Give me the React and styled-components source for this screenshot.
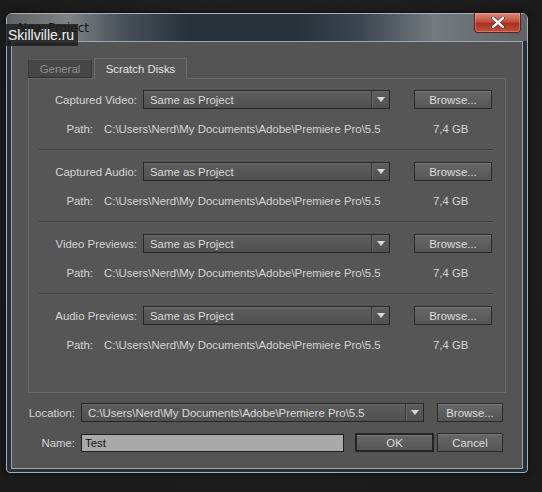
import React from "react"
import styled, { createGlobalStyle } from "styled-components"

const GlobalStyle = createGlobalStyle`
  html, body {
    margin: 0;
    padding: 0;
    background: #1d1d1d;
  }
  body {
    font-family: "Liberation Sans", Arial, sans-serif;
    font-size: 11.4px;
  }
`

const Page = styled.div`
  position: relative;
  width: 542px;
  height: 492px;
  padding: 13px 0 0 6px;
  box-sizing: border-box;
  background: radial-gradient(ellipse at 50% 40%, #262626 0%, #1b1b1b 80%);
`

const Watermark = styled.div`
  position: absolute;
  left: 0;
  top: 24px;
  width: 78px;
  height: 22px;
  background: rgba(28, 28, 28, 0.82);
  color: #f2f2f2;
  font-size: 14px;
  line-height: 22px;
  padding-left: 8px;
  box-sizing: border-box;
`

const Window = styled.div`
  width: 522px;
  height: 460px;
  box-sizing: border-box;
  border: 1px solid #a7b0b6;
  border-radius: 6px 6px 4px 4px;
  background: #25303a;
  padding: 0 4px 3px 4px;
  display: flex;
  flex-direction: column;
  box-shadow: 0 0 6px rgba(0, 0, 0, 0.6);
`

const TitleBar = styled.div`
  position: relative;
  height: 27px;
  margin: 0 -4px;
  padding: 0 0 0 11px;
  border-radius: 5px 5px 0 0;
  background: linear-gradient(
    90deg,
    #5e6367 0%,
    #7d8286 12%,
    #49525a 22%,
    #28323b 35%,
    #27313a 55%,
    #3c4650 68%,
    #737a80 82%,
    #5d6369 100%
  );
  display: flex;
  align-items: center;
`

const Title = styled.span`
  color: #161616;
  font-family: "DejaVu Sans", sans-serif;
  font-size: 12px;
  margin-top: 1px;
`

const CloseButton = styled.div`
  position: absolute;
  right: 6px;
  top: -1px;
  width: 45px;
  height: 19px;
  border: 1px solid #5a2420;
  border-top: none;
  border-radius: 0 0 4px 4px;
  background: linear-gradient(180deg, #d88a7c 0%, #c45040 45%, #a8301f 55%, #c2503c 100%);
  box-shadow: inset 0 0 0 1px rgba(255, 200, 190, 0.35);
  display: flex;
  align-items: center;
  justify-content: center;
`

const Body = styled.div`
  flex: 1;
  border: 1px solid #9ea7ad;
  background: #545454;
  padding: 16px 16px 0 16px;
  display: flex;
  flex-direction: column;
`

const Tabs = styled.div`
  display: flex;
  align-items: flex-end;
  gap: 2px;
  height: 20px;
`

const Tab = styled.div`
  box-sizing: border-box;
  height: ${(p) => (p.active ? "21px" : "19px")};
  margin-bottom: ${(p) => (p.active ? "-1px" : "0")};
  display: flex;
  align-items: center;
  justify-content: center;
  width: ${(p) => p.w}px;
  color: ${(p) => (p.active ? "#e4e4e4" : "#8e8e8e")};
  background: ${(p) => (p.active ? "#565656" : "#474747")};
  border: 1px solid ${(p) => (p.active ? "#6c6c6c" : "#3a3a3a")};
  border-bottom: ${(p) => (p.active ? "none" : "1px solid #2e2e2e")};
  border-top-color: ${(p) => (p.active ? "#6c6c6c" : "#5a5a5a")};
  position: relative;
  z-index: 1;
`

const TabPanel = styled.div`
  height: 315px;
  box-sizing: border-box;
  border: 1px solid #6a6a6a;
  background: #565656;
  padding: 0 12px 0 10px;
`

const Section = styled.div`
  padding: 11px 0 0;
  height: 71px;
  box-sizing: border-box;
  border-bottom: ${(p) => (p.last ? "none" : "1px solid #3e3e3e")};
  box-shadow: ${(p) => (p.last ? "none" : "0 1px 0 #606060")};
  margin-bottom: 1px;
`

const DiskRow = styled.div`
  display: grid;
  grid-template-columns: 108px 247px 78px;
  column-gap: 6px;
  margin-left: -10px;
  align-items: center;
  & > :last-child {
    margin-left: 18px;
  }
`

const Label = styled.span`
  text-align: right;
  color: #d4d4d4;
  white-space: nowrap;
`

const PathRow = styled.div`
  display: grid;
  grid-template-columns: 64px 318px auto;
  column-gap: 11px;
  margin: 13px 0 0 -10px;
  height: 14px;
  align-items: center;
  color: #d4d4d4;
  white-space: nowrap;
`

const Select = styled.div`
  box-sizing: border-box;
  height: 19px;
  width: ${(p) => p.w}px;
  border: 1px solid #262626;
  background: linear-gradient(180deg, #5d5d5d 0%, #515151 100%);
  box-shadow: inset 0 1px 0 #6a6a6a;
  display: flex;
  align-items: center;
  color: #dadada;
`

const SelectText = styled.span`
  flex: 1;
  padding-left: 6px;
  white-space: nowrap;
  overflow: hidden;
`

const Arrow = styled.span`
  width: 17px;
  height: 100%;
  border-left: 1px solid #3a3a3a;
  box-shadow: inset 1px 0 0 #666;
  display: flex;
  align-items: center;
  justify-content: center;
  &::after {
    content: "";
    border-left: 4px solid transparent;
    border-right: 4px solid transparent;
    border-top: 5px solid #d8d8d8;
  }
`

const Button = styled.div`
  box-sizing: border-box;
  height: 19px;
  width: ${(p) => p.w}px;
  border: ${(p) => (p.primary ? "2px solid #242424" : "1px solid #2a2a2a")};
  background: linear-gradient(180deg, #686868 0%, #555555 100%);
  box-shadow: inset 0 1px 0 #787878;
  color: #dedede;
  display: flex;
  align-items: center;
  justify-content: center;
`

const Footer = styled.div`
  display: flex;
  flex-direction: column;
  gap: 11px;
  padding: 10px 0 0 0;
  margin-left: -4px;
`

const FooterRow = styled.div`
  display: flex;
  align-items: center;
`

const FooterLabel = styled(Label)`
  width: 51px;
  margin-right: 6px;
`

const NameInput = styled.div`
  box-sizing: border-box;
  width: 263px;
  height: 18px;
  border: 1px solid #1e1e1e;
  background: #a9a9a9;
  color: #111;
  padding-left: 3px;
  display: flex;
  align-items: center;
`

const Spacer = styled.span`
  width: ${(p) => p.w}px;
`

const disks = ["Captured Video:", "Captured Audio:", "Video Previews:", "Audio Previews:"]
const path = "C:\\Users\\Nerd\\My Documents\\Adobe\\Premiere Pro\\5.5"

const CloseIcon = () => (
  <svg width="14" height="11" viewBox="0 0 14 11">
    <path d="M2 1 L12 10 M12 1 L2 10" stroke="#3a1a16" strokeWidth="3.6" strokeLinecap="round" />
    <path d="M2 1 L12 10 M12 1 L2 10" stroke="#ffffff" strokeWidth="2.4" strokeLinecap="round" />
  </svg>
)

export default function App() {
  return (
    <Page>
      <GlobalStyle />
      <Window>
        <TitleBar>
          <Title>New Project</Title>
          <CloseButton>
            <CloseIcon />
          </CloseButton>
        </TitleBar>
        <Body>
          <Tabs>
            <Tab w={64}>General</Tab>
            <Tab active w={93}>Scratch Disks</Tab>
          </Tabs>
          <TabPanel>
            {disks.map((d, i) => (
              <Section key={d} last={i === disks.length - 1}>
                <DiskRow>
                  <Label>{d}</Label>
                  <Select w={247}>
                    <SelectText>Same as Project</SelectText>
                    <Arrow />
                  </Select>
                  <Button w={78}>Browse...</Button>
                </DiskRow>
                <PathRow>
                  <Label>Path:</Label>
                  <span>{path}</span>
                  <span>7,4 GB</span>
                </PathRow>
              </Section>
            ))}
          </TabPanel>
          <Footer>
            <FooterRow>
              <FooterLabel>Location:</FooterLabel>
              <Select w={343}>
                <SelectText>{path}</SelectText>
                <Arrow />
              </Select>
              <Spacer w={13} />
              <Button w={66}>Browse...</Button>
            </FooterRow>
            <FooterRow>
              <FooterLabel>Name:</FooterLabel>
              <NameInput>Test</NameInput>
              <Spacer w={11} />
              <Button primary w={79}>OK</Button>
              <Spacer w={3} />
              <Button w={66}>Cancel</Button>
            </FooterRow>
          </Footer>
        </Body>
      </Window>
      <Watermark>Skillville.ru</Watermark>
    </Page>
  )
}
